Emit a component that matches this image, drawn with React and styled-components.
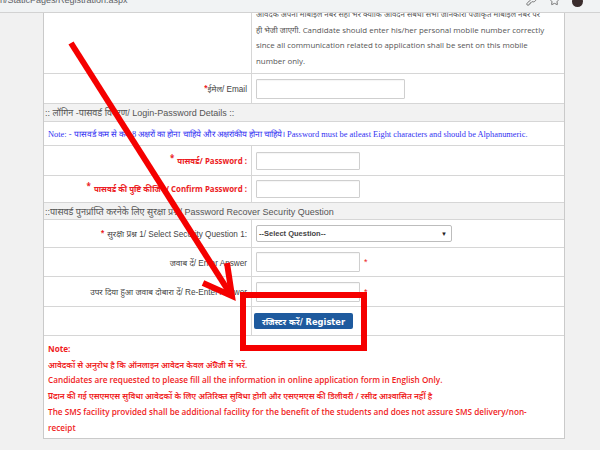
import React from "react";
import styled, { createGlobalStyle } from "styled-components";
import { KeyRound, Star } from "lucide-react";

const GlobalStyle = createGlobalStyle`
  html, body {
    margin: 0;
    padding: 0;
    background: #f1f1f1;
    font-family: "Liberation Sans", "Noto Sans", sans-serif;
  }
  * { box-sizing: border-box; }
`;

const Screen = styled.div`
  position: relative;
  width: 600px;
  height: 450px;
  overflow: hidden;
  background: #f1f1f1;
`;

const UrlBar = styled.div`
  height: 13px;
  display: flex;
  align-items: flex-start;
  justify-content: space-between;
  background: #f1f3f4;
  border-bottom: 1px solid #d2d2d2;
  overflow: hidden;
  position: relative;
  z-index: 2;
`;

const UrlText = styled.span`
  margin-top: -5px;
  font-size: 9px;
  color: #5f6368;
  white-space: nowrap;
`;

const BarIcons = styled.div`
  display: flex;
  align-items: flex-start;
  gap: 12px;
  margin-top: -5px;
  padding-right: 17px;
  color: #6b6b6b;
`;

const Avatar = styled.div`
  width: 11px;
  height: 11px;
  border-radius: 50%;
  background: #3b2d2d;
  margin-top: 1px;
`;

const Viewport = styled.div`
  height: 437px;
  overflow: hidden;
`;

const Page = styled.div`
  padding-left: 43px;
  margin-top: -10px;
`;

const Container = styled.div`
  width: 522px;
  background: #fff;
  border: 1px solid #cacaca;
  border-top: none;
`;

const Row = styled.div`
  display: grid;
  grid-template-columns: 208px 1fr;
  height: ${(p) => p.$h}px;
  border-bottom: 1px solid #d6d6d6;
`;

const Label = styled.div`
  display: flex;
  align-items: center;
  justify-content: flex-end;
  padding-right: 4px;
  border-right: 1px solid #d6d6d6;
  font-size: 8.2px;
  color: #444;
  white-space: nowrap;
`;

const RedLabel = styled(Label)`
  font-family: "Open Sans", "Noto Sans", sans-serif;
  font-weight: 700;
  font-size: 7.9px;
  color: #ec1c24;
`;

const Star_ = styled.span`
  color: #ec1c24;
  font-weight: 700;
  position: relative;
  top: ${(p) => (p.$raised ? "-3px" : "0")};
  margin-right: ${(p) => (p.$gap ? "3px" : "0")};
`;

const Field = styled.div`
  display: flex;
  align-items: center;
  gap: 3px;
  padding-left: 4px;
`;

const MobileText = styled.div`
  padding: 4px 4px 0 4px;
  font-family: "Open Sans", "Noto Sans", sans-serif;
  font-size: 7.9px;
  line-height: 15.5px;
  color: #555;
  white-space: nowrap;
`;

const TextInput = styled.div`
  width: ${(p) => p.$w}px;
  height: ${(p) => p.$hh}px;
  border: 1px solid #cfcfcf;
  border-radius: 1px;
  background: #fff;
  box-shadow: inset 0 1px 1px rgba(0, 0, 0, 0.04);
`;

const Select = styled.div`
  width: 196px;
  height: 17px;
  border: 1px solid #bdbdbd;
  border-radius: 2px;
  display: flex;
  align-items: center;
  justify-content: space-between;
  padding: 0 4px 0 2px;
  font-size: 7.5px;
  font-weight: 700;
  color: #444;
`;

const Caret = styled.span`
  font-size: 6px;
  color: #222;
`;

const Header = styled.div`
  height: ${(p) => p.$h}px;
  display: flex;
  align-items: center;
  padding-left: 1px;
  background: #f2f2f2;
  border-bottom: 1px solid #d6d6d6;
  font-size: 9px;
  color: #555;
  white-space: nowrap;
`;

const BlueNote = styled.div`
  height: 24px;
  display: flex;
  align-items: center;
  padding-left: 4px;
  border-bottom: 1px solid #d6d6d6;
  font-family: "Liberation Serif", "Noto Serif", serif;
  font-size: 8.4px;
  color: #3232f2;
  white-space: nowrap;
`;

const Asterisk = styled.span`
  color: #ec1c24;
  font-size: 9px;
  margin-left: 1px;
`;

const Button = styled.button`
  margin-left: -2px;
  width: 99px;
  height: 16px;
  border: none;
  border-radius: 2px;
  background: #1e5a9e;
  color: #fff;
  font-family: "DejaVu Sans", "Noto Sans", sans-serif;
  font-weight: 700;
  font-size: 8.3px;
  padding: 0;
  white-space: nowrap;
`;

const Notes = styled.div`
  height: 102px;
  padding: 5px 5px 0 4px;
  font-family: "Open Sans", "Noto Sans", sans-serif;
  font-weight: 600;
  font-size: 8.2px;
  line-height: 15.7px;
  color: #f01d1d;
  white-space: nowrap;
`;

const NoteTitle = styled.div`
  font-weight: 700;
`;

const Footer = styled.div`
  height: 13px;
  display: flex;
  align-items: flex-end;
  border-top: 3px solid #f1f1f1;
  background: #e6e6e6;
`;

const Tab = styled.div`
  width: ${(p) => p.$w}px;
  height: ${(p) => (p.$active ? 4 : 6)}px;
  background: ${(p) => p.$bg};
  border-left: ${(p) => (p.$sep ? "1px solid #d0d0d0" : "none")};
`;

const Overlay = styled.svg`
  position: absolute;
  left: 0;
  top: 0;
  pointer-events: none;
  z-index: 3;
`;

export default function App() {
  return (
    <>
      <GlobalStyle />
      <Screen>
        <UrlBar>
          <UrlText>n/StaticPages/Registration.aspx</UrlText>
          <BarIcons>
            <KeyRound size={11} strokeWidth={2} />
            <Star size={11} strokeWidth={2} />
            <Avatar />
          </BarIcons>
        </UrlBar>
        <Viewport>
          <Page>
            <Container>
              <Row $h={71}>
                <Label />
                <MobileText>
                  आवेदक अपना मोबाइल नंबर सही भरें क्योंकि आवेदन संबंधी सभी जानकारी पंजीकृत मोबाइल नंबर पर
                  <br />
                  ही भेजी जाएगी. Candidate should enter his/her personal mobile number correctly
                  <br />
                  since all communication related to application shall be sent on this mobile
                  <br />
                  number only.
                </MobileText>
              </Row>
              <Row $h={30}>
                <Label>
                  <Star_>*</Star_>ईमेल/ Email
                </Label>
                <Field>
                  <TextInput $w={149} $hh={20} />
                </Field>
              </Row>
              <Header $h={18}>:: लॉगिन -पासवर्ड विवरण/ Login-Password Details ::</Header>
              <BlueNote>
                Note: - पासवर्ड कम से कम 8 अक्षरों का होना चाहिये और अक्षरांकीय होना चाहिये। Password must be atleast Eight characters and should be Alphanumeric.
              </BlueNote>
              <Row $h={30}>
                <RedLabel>
                  <Star_ $raised $gap>*</Star_>पासवर्ड/ Password :
                </RedLabel>
                <Field>
                  <TextInput $w={104} $hh={18} />
                </Field>
              </Row>
              <Row $h={27}>
                <RedLabel>
                  <Star_ $raised $gap>*</Star_>पासवर्ड की पुष्टि कीजिये/ Confirm Password :
                </RedLabel>
                <Field>
                  <TextInput $w={104} $hh={18} />
                </Field>
              </Row>
              <Header $h={17}>::पासवर्ड पुनर्प्राप्ति करनेके लिए सुरक्षा प्रश्न/ Password Recover Security Question</Header>
              <Row $h={28}>
                <Label>
                  <Star_ $gap>*</Star_>सुरक्षा प्रश्न 1/ Select Security Question 1:
                </Label>
                <Field>
                  <Select>
                    --Select Question--
                    <Caret>▼</Caret>
                  </Select>
                </Field>
              </Row>
              <Row $h={29}>
                <Label>जवाब दें/ Enter Answer</Label>
                <Field>
                  <TextInput $w={104} $hh={20} />
                  <Asterisk>*</Asterisk>
                </Field>
              </Row>
              <Row $h={30}>
                <Label>उपर दिया हुआ जवाब दोबारा दें/ Re-Enter Answer</Label>
                <Field>
                  <TextInput $w={104} $hh={20} />
                  <Asterisk>*</Asterisk>
                </Field>
              </Row>
              <Row $h={29}>
                <Label />
                <Field>
                  <Button>रजिस्टर करें/ Register</Button>
                </Field>
              </Row>
              <Notes>
                <NoteTitle>Note:</NoteTitle>
                <div>आवेदकों से अनुरोध है कि ऑनलाइन आवेदन केवल अंग्रेजी में भरें.</div>
                <div>Candidates are requested to please fill all the information in online application form in English Only.</div>
                <div>प्रदान की गई एसएमएस सुविधा आवेदकों के लिए अतिरिक्त सुविधा होगी और एसएमएस की डिलीवरी / रसीद आश्वासित नहीं है</div>
                <div>The SMS facility provided shall be additional facility for the benefit of the students and does not assure SMS delivery/non-</div>
                <div>receipt</div>
              </Notes>
            </Container>
          </Page>
        </Viewport>
        <Footer>
          <Tab $w={109} $bg="#f2f2f2" />
          <Tab $w={103} $bg="#1d4f8f" $active $sep />
          <Tab $w={103} $bg="#f8f8f8" $sep />
          <Tab $w={285} $bg="#efefef" $sep />
        </Footer>
        <Overlay width="600" height="450" viewBox="0 0 600 450">
          <line x1="71" y1="43" x2="231" y2="295" stroke="#f50000" strokeWidth="6" />
          <polyline
            points="227,263 232,296 203,283"
            fill="none"
            stroke="#f50000"
            strokeWidth="6"
            strokeLinejoin="miter"
          />
          <rect x="243" y="295" width="121" height="53" fill="none" stroke="#f50000" strokeWidth="6" />
        </Overlay>
      </Screen>
    </>
  );
}
